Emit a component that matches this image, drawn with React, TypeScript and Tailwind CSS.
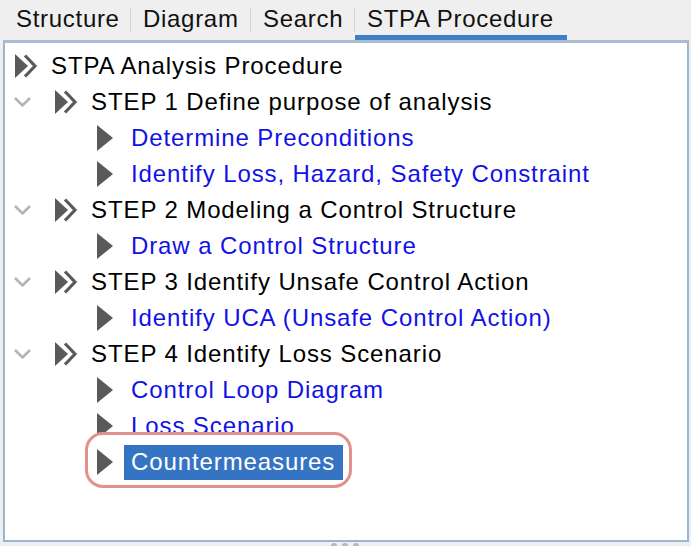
import React from "react";

const DoubleChevron = () => (
  <svg width="23" height="24" viewBox="0 0 23 24" className="shrink-0">
    <polygon points="0,0 13,12 0,24" fill="#5a5a5a" />
    <polyline points="10,1.5 20,12 10,22.5" fill="none" stroke="#5a5a5a" strokeWidth="3.2" />
  </svg>
);

const Triangle = () => (
  <svg width="16" height="26" viewBox="0 0 16 26" className="shrink-0">
    <polygon points="0,0 16,13 0,26" fill="#5a5a5a" />
  </svg>
);

const Expander = () => (
  <svg width="19" height="12" viewBox="0 0 19 12" className="shrink-0">
    <polyline points="2,2 9.5,9.5 17,2" fill="none" stroke="#b4b4b4" strokeWidth="2.6" />
  </svg>
);

const Step = ({ label }: { label: string }) => (
  <div className="flex h-[36px] items-center">
    <div className="ml-[8px] w-[19px] flex items-center">
      <Expander />
    </div>
    <div className="ml-[23px]">
      <DoubleChevron />
    </div>
    <span className="ml-[13px] text-black whitespace-nowrap">{label}</span>
  </div>
);

const Leaf = ({ label }: { label: string }) => (
  <div className="flex h-[36px] items-center">
    <div className="ml-[92px]">
      <Triangle />
    </div>
    <span className="ml-[18px] text-[#1212e6] whitespace-nowrap">{label}</span>
  </div>
);

export default function App() {
  return (
    <div className="w-[691px] h-[546px] bg-[#efefef] overflow-hidden font-['Liberation_Sans',Arial,sans-serif] text-[24px] leading-none">
      {/* Tab bar */}
      <div className="h-[40px] flex pl-[5px] text-[#111] tracking-[0.7px]">
        <div className="w-[125px] flex items-center pl-[11px] pb-[2px]">Structure</div>
        <div className="w-px my-[8px] bg-[#d4d4d4]" />
        <div className="w-[119px] flex items-center pl-[12px] pb-[2px]">Diagram</div>
        <div className="w-px my-[8px] bg-[#d4d4d4]" />
        <div className="w-[103px] flex items-center pl-[12px] pb-[2px]">Search</div>
        <div className="w-px my-[8px] bg-[#d4d4d4]" />
        <div className="w-[212px] flex flex-col">
          <div className="flex-1 flex items-center pl-[12px] pt-[3px]">STPA Procedure</div>
          <div className="h-[5px] bg-[#3f7fc6]" />
        </div>
      </div>

      {/* Panel */}
      <div className="ml-[3px] w-[686px] h-[502px] bg-white border-2 border-[#9bb6d3] border-t-[3px] border-t-[#a9bdd2] tracking-[0.9px]">
        <div className="relative pt-[5px]">
          <div className="flex h-[36px] items-center">
            <div className="ml-[10px]">
              <DoubleChevron />
            </div>
            <span className="ml-[13px] text-black whitespace-nowrap">STPA Analysis Procedure</span>
          </div>
          <Step label="STEP 1 Define purpose of analysis" />
          <Leaf label="Determine Preconditions" />
          <Leaf label="Identify Loss, Hazard, Safety Constraint" />
          <Step label="STEP 2 Modeling a Control Structure" />
          <Leaf label="Draw a Control Structure" />
          <Step label="STEP 3 Identify Unsafe Control Action" />
          <Leaf label="Identify UCA (Unsafe Control Action)" />
          <Step label="STEP 4 Identify Loss Scenario" />
          <Leaf label="Control Loop Diagram" />
          <Leaf label="Loss Scenario" />

          {/* annotation outline */}
          <div className="absolute left-[80px] top-[389px] w-[267px] h-[56px] rounded-[18px] border-[3px] border-[#e3928b] bg-white z-[1]" />

          <div className="relative z-[2] flex h-[36px] items-center">
            <div className="ml-[92px]">
              <Triangle />
            </div>
            <span className="ml-[11px] h-[35px] flex items-center pl-[7px] pr-[8px] bg-[#3574c2] text-white whitespace-nowrap">
              Countermeasures
            </span>
          </div>
        </div>
      </div>

      {/* splitter dots */}
      <div className="flex justify-center gap-[5px] mt-[1px] ml-[-1px]">
        <div className="w-[6px] h-[6px] rounded-full bg-[#b8b8b8]" />
        <div className="w-[6px] h-[6px] rounded-full bg-[#b8b8b8]" />
        <div className="w-[6px] h-[6px] rounded-full bg-[#b8b8b8]" />
      </div>
    </div>
  );
}
